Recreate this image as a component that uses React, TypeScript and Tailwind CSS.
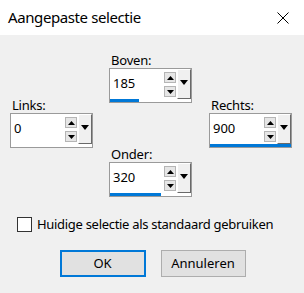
import React from 'react'

type SpinProps = {
  label: string
  value: string
  bar: number
  className?: string
}

function SpinField({ label, value, bar, className = '' }: SpinProps) {
  return (
    <div className={`flex flex-col ${className}`}>
      <span className="h-[15px] leading-[15px] pl-[2px] text-[13px] tracking-[-0.2px] text-black">{label}</span>
      <div className="w-[83px] h-[35px] border border-[#9a9a9a] bg-white flex flex-col">
        <div className="flex h-[30px]">
          <div className="w-[54px] flex items-center pl-[3px] text-[13px] text-black">{value}</div>
          <div className="w-[12px] flex flex-col gap-[3px] pt-[3px]">
            <div className="h-[11px] border border-[#b5b5b5] bg-[#e6e6e6] flex items-center justify-center">
              <svg width="7" height="4" viewBox="0 0 7 4"><polygon points="0,4 7,4 3.5,0" fill="#000" /></svg>
            </div>
            <div className="h-[11px] border border-[#b5b5b5] bg-[#e6e6e6] flex items-center justify-center">
              <svg width="7" height="4" viewBox="0 0 7 4"><polygon points="0,0 7,0 3.5,4" fill="#000" /></svg>
            </div>
          </div>
          <div className="ml-[1px] w-[14px] bg-[#f0f0f0] border-l border-t border-white border-r border-b border-r-[#696969] border-b-[#696969] flex justify-center pt-[10px]">
            <svg width="8" height="5" viewBox="0 0 8 5"><polygon points="0,0 8,0 4,5" fill="#000" /></svg>
          </div>
        </div>
        <div className="h-[3px] bg-white">
          <div className="h-full bg-[#0078d7]" style={{ width: bar }} />
        </div>
      </div>
    </div>
  )
}

export default function App() {
  return (
    <div className="w-[304px] h-[293px] bg-[#f0f0f0] font-['Noto_Sans',sans-serif] overflow-hidden">
      {/* title bar */}
      <div className="h-[35px] bg-white flex items-center justify-between pl-[8px] pr-[15px]">
        <span className="text-[15px] tracking-[-0.4px] text-black">Aangepaste selectie</span>
        <svg width="12" height="12" viewBox="0 0 12 12">
          <path d="M0.5 0.5 L11.5 11.5 M11.5 0.5 L0.5 11.5" stroke="#000" strokeWidth="1" />
        </svg>
      </div>

      {/* spin fields */}
      <div className="pt-[18px] pl-[10px] grid grid-cols-[99px_100px_83px]">
        <SpinField className="col-start-2 row-start-1" label="Boven:" value="185" bar={29} />
        <SpinField className="col-start-1 row-start-2 -mt-[5px]" label="Links:" value="0" bar={0} />
        <SpinField className="col-start-3 row-start-2 -mt-[5px]" label="Rechts:" value="900" bar={81} />
        <SpinField className="col-start-2 row-start-3 -mt-[1px]" label="Onder:" value="320" bar={51} />
      </div>

      {/* checkbox */}
      <div className="mt-[20px] pl-[17px] flex items-center gap-[5px] h-[15px]">
        <div className="w-[15px] h-[15px] border border-[#333] bg-white" />
        <span className="text-[13px] tracking-[-0.3px] text-black">Huidige selectie als standaard gebruiken</span>
      </div>

      {/* buttons */}
      <div className="mt-[18px] flex justify-center gap-[15px] pl-[1px]">
        <button className="w-[86px] h-[27px] border-2 border-[#0078d7] bg-[#e1e1e1] text-[13px] text-black">OK</button>
        <button className="w-[85px] h-[27px] border border-[#adadad] bg-[#e1e1e1] text-[13px] text-black">Annuleren</button>
      </div>
    </div>
  )
}
